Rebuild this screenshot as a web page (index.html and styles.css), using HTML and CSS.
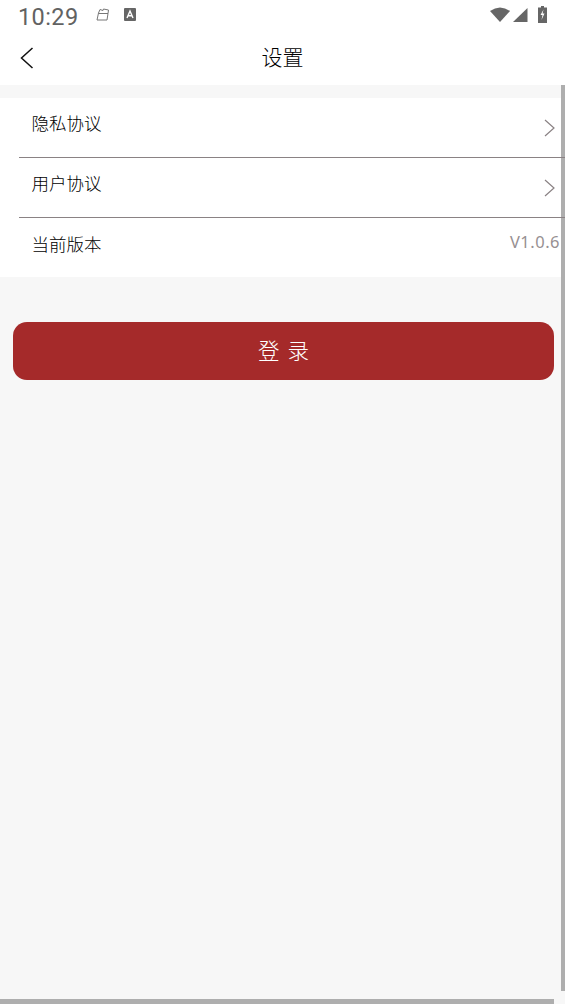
FILE: index.html
```html
<!DOCTYPE html>
<html lang="zh">
<head>
<meta charset="utf-8">
<title>设置</title>
<link rel="stylesheet" href="styles.css">
</head>
<body>
<div class="page">
  <div class="top">
    <div class="status">
      <span class="time">10:29</span>
      <svg class="ic-bag" width="14" height="14" viewBox="0 0 14 14"><path d="M2.500 5 L4 1.500 L7 2.500 L7.500 1 L12.500 2 L12 5.500 L11 12 L1 12 Z M2.500 5.500 L12 5.500" fill="none" stroke="#777" stroke-width="1"/></svg>
      <svg class="ic-a" width="12" height="14" viewBox="0 0 12 14"><rect width="12" height="13" rx="1" fill="#666"/><path d="M3 10 L6 3 L9 10 M4.200 7.800 H7.800" fill="none" stroke="#fff" stroke-width="1.400"/></svg>
      <span class="spacer"></span>
      <svg class="ic-wifi" width="20" height="16" viewBox="0 0 20 16"><path d="M0 4 Q10 -3 20 4 L10 15 Z" fill="#666"/></svg>
      <svg class="ic-signal" width="15" height="16" viewBox="0 0 15 16"><path d="M0 15 L14.500 1 V15 Z" fill="#666"/></svg>
      <svg class="ic-batt" width="9" height="17" viewBox="0 0 9 17"><path d="M3 0 H6 V1.500 H9 V17 H0 V1.500 H3 Z" fill="#666"/><path d="M5.500 3.500 L2.500 9 H4.500 L3.500 14 L6.500 7.500 H4.600 Z" fill="#fff"/></svg>
    </div>
    <div class="nav">
      <svg class="back" width="16" height="24" viewBox="0 0 16 24"><path d="M14.500 2 L3.500 12 L14.500 22" fill="none" stroke="#111" stroke-width="1.500"/></svg>
      <h1 class="title">设置</h1>
    </div>
  </div>
  <div class="list">
    <div class="row">
      <span class="label">隐私协议</span>
      <svg class="chev" width="11" height="18" viewBox="0 0 11 18"><path d="M1 1 L10 9 L1 17" fill="none" stroke="#8a8284" stroke-width="1.200"/></svg>
    </div>
    <div class="row">
      <span class="label">用户协议</span>
      <svg class="chev" width="11" height="18" viewBox="0 0 11 18"><path d="M1 1 L10 9 L1 17" fill="none" stroke="#8a8284" stroke-width="1.200"/></svg>
    </div>
    <div class="row last">
      <span class="label">当前版本</span>
      <span class="version">V1.0.6</span>
    </div>
  </div>
  <button class="login">登录</button>
</div>
<div class="scroll-v"></div>
<div class="scroll-h"></div>
</body>
</html>
```
FILE: styles.css
```css
* { box-sizing: border-box; }
html, body { margin: 0; height: 100%; overflow: hidden; }
body {
  background: #f7f7f7;
  font-family: "Noto Sans CJK SC", "Noto Sans", sans-serif;
  color: #000;
}
.page { display: flex; flex-direction: column; height: 1004px; }
.top { background: #fff; height: 85px; flex: none; }
.status {
  display: flex;
  align-items: center;
  height: 34px;
  padding: 0 18px 0 18px;
}
.time {
  font-family: Roboto, sans-serif;
  font-size: 23.500px;
  letter-spacing: 0.400px;
  color: #626262;
  line-height: 34px;
}
.ic-bag { margin-left: 17px; margin-bottom: 5px; }
.ic-a { margin-left: 14px; margin-bottom: 5px; }
.spacer { flex: 1; }
.ic-wifi { margin-bottom: 4px; }
.ic-signal { margin-left: 3px; margin-bottom: 5px; }
.ic-batt { margin-left: 10px; margin-bottom: 5px; }
.nav {
  position: relative;
  height: 51px;
  display: flex;
  align-items: center;
  justify-content: center;
  padding-bottom: 7px;
}
.back { position: absolute; left: 18px; top: 12px; }
.title { margin: 0; font-size: 21px; font-weight: 300; line-height: 36px; }
.list {
  margin-top: 13px;
  background: #fff;
  display: flex;
  flex-direction: column;
  flex: none;
}
.row {
  position: relative;
  z-index: 2;
  height: 60px;
  margin-left: 19px;
  padding: 0 10px 9px 12.500px;
  border-bottom: 1px solid #8a8284;
  display: flex;
  align-items: center;
  justify-content: space-between;
}
.row.last { border-bottom: 0; height: 59px; padding: 0 5px 8px 12.500px; }
.label { font-size: 17.500px; font-weight: 300; line-height: 26px; }
.version {
  font-family: "Noto Sans", sans-serif;
  font-size: 16.500px;
  letter-spacing: 0.500px;
  color: #979092;
  margin-bottom: 4px;
}
.chev { margin-top: 9px; }
.login {
  margin: 45px 11px 0 13px;
  height: 58px;
  padding: 0 0 4px;
  flex: none;
  border: 0;
  border-radius: 14px;
  background: #a52a2a;
  color: #fff;
  font-family: inherit;
  font-size: 21.500px;
  font-weight: 300;
  letter-spacing: 8px;
  text-indent: 8px;
}
.scroll-v {
  position: absolute;
  z-index: 1;
  right: 0;
  top: 85px;
  width: 4px;
  height: 906px;
  background: #aeaeae;
}
.scroll-h {
  position: absolute;
  left: 0;
  bottom: 0;
  width: 554px;
  height: 5px;
  background: #aeaeae;
}
```
